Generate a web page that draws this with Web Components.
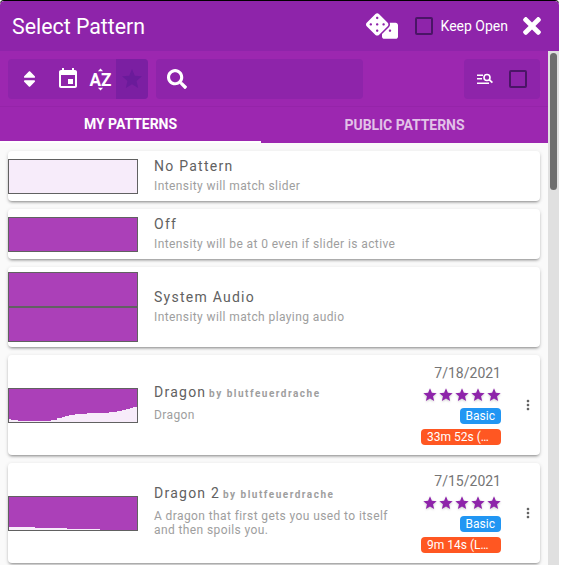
<!DOCTYPE html>
<html>
<head>
<meta charset="utf-8">
<title>Select Pattern</title>
<style>
  html, body { margin: 0; height: 100%; overflow: hidden; background: #fff; font-family: Roboto, "Liberation Sans", sans-serif; }
</style>
</head>
<body>
<pattern-dialog>
  <pattern-card kind="empty" name="No Pattern" style="height:50px">Intensity will match slider</pattern-card>
  <pattern-card kind="off" name="Off" style="height:50px">Intensity will be at 0 even if slider is active</pattern-card>
  <pattern-card kind="audio" name="System Audio" style="height:80px">Intensity will match playing audio</pattern-card>
  <pattern-card kind="line" name="Dragon" author="blutfeuerdrache" date="7/18/2021" duration="33m 52s (…"
    line="M0 33V30H2V30.5H9V32H42V30.5H48V29H53V28H56V27H60V26H66V25H70V24.5H78V24H82V23.5H100V22.5H108V21.5H113V20.5H117V19.5H121V18.5H124V17.5H128V33Z" style="height:100px">Dragon</pattern-card>
  <pattern-card kind="line" name="Dragon 2" author="blutfeuerdrache" date="7/15/2021" duration="9m 14s (L…"
    line="M0 33V30H26V31H58V32H91V33Z" style="height:100px">A dragon that first gets you used to itself and then spoils you.</pattern-card>
</pattern-dialog>

<script>
const ICONS = {
  dice: ["0 0 640 512", "M592 192H473.26c12.69 29.59 7.12 65.2-17 89.32L320 417.58V464c0 26.51 21.49 48 48 48h224c26.51 0 48-21.49 48-48V240c0-26.51-21.49-48-48-48zM480 376c-13.25 0-24-10.75-24-24 0-13.26 10.75-24 24-24s24 10.74 24 24c0 13.25-10.75 24-24 24zm-46.37-186.7L258.7 14.37c-19.16-19.16-50.23-19.16-69.39 0L14.37 189.3c-19.16 19.16-19.16 50.23 0 69.39L189.3 433.63c19.16 19.16 50.23 19.16 69.39 0L433.63 258.7c19.17-19.17 19.17-50.24 0-69.4zM96 248c-13.25 0-24-10.75-24-24 0-13.26 10.75-24 24-24s24 10.74 24 24c0 13.25-10.75 24-24 24zm128 128c-13.25 0-24-10.75-24-24 0-13.26 10.75-24 24-24s24 10.74 24 24c0 13.25-10.75 24-24 24zm0-128c-13.25 0-24-10.75-24-24 0-13.26 10.75-24 24-24s24 10.74 24 24c0 13.25-10.75 24-24 24zm0-128c-13.25 0-24-10.75-24-24 0-13.26 10.75-24 24-24s24 10.74 24 24c0 13.25-10.75 24-24 24zm128 128c-13.25 0-24-10.75-24-24 0-13.26 10.75-24 24-24s24 10.74 24 24c0 13.25-10.75 24-24 24z"],
  close: ["0 0 352 512", "M242.72 256l100.07-100.07c12.28-12.28 12.28-32.19 0-44.48l-22.24-22.24c-12.28-12.28-32.19-12.28-44.48 0L176 189.28 75.93 89.21c-12.28-12.28-32.19-12.28-44.48 0L9.21 111.45c-12.28 12.28-12.28 32.19 0 44.48L109.28 256 9.21 356.07c-12.28 12.28-12.28 32.19 0 44.48l22.24 22.24c12.28 12.28 32.2 12.28 44.48 0L176 322.72l100.07 100.07c12.28 12.28 32.2 12.28 44.48 0l22.24-22.24c12.28-12.28 12.28-32.19 0-44.48L242.72 256z"],
  sort: ["0 0 320 512", "M41 288h238c21.4 0 32.1 25.9 17 41L177 448c-9.4 9.4-24.6 9.4-33.9 0L24 329c-15.1-15.1-4.4-41 17-41zm255-105L177 64c-9.4-9.4-24.6-9.4-33.9 0L24 183c-15.1 15.1-4.4 41 17 41h238c21.4 0 32.1-25.9 17-41z"],
  search: ["0 0 512 512", "M505 442.7L405.3 343c-4.5-4.5-10.6-7-17-7H372c27.6-35.3 44-79.7 44-128C416 93.1 322.9 0 208 0S0 93.1 0 208s93.1 208 208 208c48.3 0 92.7-16.4 128-44v16.3c0 6.4 2.5 12.5 7 17l99.7 99.7c9.4 9.4 24.6 9.4 33.9 0l28.3-28.3c9.4-9.4 9.4-24.6.1-34zM208 336c-70.7 0-128-57.2-128-128 0-70.7 57.2-128 128-128 70.7 0 128 57.2 128 128 0 70.7-57.2 128-128 128z"],
  event: ["0 0 24 24", "M17 12h-5v5h5v-5zM16 1v2H8V1H6v2H5c-1.11 0-1.99.9-1.99 2L3 19c0 1.1.89 2 2 2h14c1.1 0 2-.9 2-2V5c0-1.1-.9-2-2-2h-1V1h-2zm3 18H5V8h14v11z"],
  star: ["0 0 24 24", "M12 17.27L18.18 21l-1.64-7.03L22 9.24l-7.19-.61L12 2 9.19 8.63 2 9.24l5.46 4.73L5.82 21z"],
  kebab: ["0 0 24 24", "M12 8c1.1 0 2-.9 2-2s-.9-2-2-2-2 .9-2 2 .9 2 2 2zm0 2c-1.1 0-2 .9-2 2s.9 2 2 2 2-.9 2-2-.9-2-2-2zm0 6c-1.1 0-2 .9-2 2s.9 2 2 2 2-.9 2-2-.9-2-2-2z"],
};

function icon(name, w, h, color) {
  const [box, d] = ICONS[name];
  return `<svg width="${w}" height="${h}" viewBox="${box}" style="display:block"><path fill="${color || "#fff"}" d="${d}"/></svg>`;
}

class CheckBox extends HTMLElement {
  constructor() {
    super();
    this.attachShadow({ mode: "open" }).innerHTML = `
      <style>
        :host { display: block; width: 18px; height: 18px; box-sizing: border-box; border: 2px solid #4a1566; border-radius: 2px; }
      </style>`;
  }
}

class DialogHeader extends HTMLElement {
  constructor() {
    super();
    this.attachShadow({ mode: "open" }).innerHTML = `
      <style>
        :host { display: flex; align-items: center; height: 50px; background: #8e24aa; color: #fff; padding-left: 12px; border-radius: 4px 4px 0 0; }
        .title { flex: 1; font-size: 21.33px; font-weight: 400; }
        .dice { margin-right: 17px; }
        .keep { margin: 0 15px 0 8px; font-size: 14px; }
        .close { margin-right: 18px; }
      </style>
      <div class="title">Select Pattern</div>
      <div class="dice">${icon("dice", 32, 26)}</div>
      <check-box></check-box>
      <div class="keep">Keep Open</div>
      <div class="close">${icon("close", 18, 26)}</div>`;
  }
}

class FilterToolbar extends HTMLElement {
  constructor() {
    super();
    this.attachShadow({ mode: "open" }).innerHTML = `
      <style>
        :host { display: flex; gap: 8px; padding: 8px; height: 56px; box-sizing: border-box; background: #9c27b0; border-bottom: 1px solid #9524a9; }
        .group { display: flex; align-items: center; height: 40px; background: #8e24aa; border-radius: 4px; overflow: hidden; }
        .btn { display: flex; align-items: center; justify-content: center; height: 40px; }
        .active { background: #7b1fa2; }
        .search { width: 207px; padding-left: 11px; box-sizing: border-box; }
        .spacer { flex: 1; }
        .az { font: 700 18px/18px Roboto, sans-serif; fill: #fff; }
        .filter { width: 76px; }
      </style>
      <div class="group">
        <div class="btn" style="width:42px">${icon("sort", 13, 20)}</div>
        <div class="btn" style="width:36px">${icon("event", 24, 24)}</div>
        <div class="btn" style="width:30px">
          <svg width="24" height="24" viewBox="0 0 24 24" style="display:block">
            <text class="az" x="0.5" y="18.5" textLength="22" lengthAdjust="spacingAndGlyphs">AZ</text>
            <path fill="#fff" d="M11.5 1.5l2.6 2.8H8.9zM11.5 23.5l-2.6-2.8h5.2z"/>
          </svg>
        </div>
        <div class="btn active" style="width:32px">${icon("star", 24, 24, "#6a1b9a")}</div>
      </div>
      <div class="group search">${icon("search", 20, 20)}</div>
      <div class="spacer"></div>
      <div class="group filter">
        <div class="btn" style="width:42px;margin-right:3px">
          <svg width="16" height="12" viewBox="0 0 16 12" style="display:block">
            <path fill="#fff" d="M0 1.5h6v1.4H0zM0 5h5v1.4H0zM0 9.6h12v1.4H0z"/>
            <circle cx="10" cy="4.5" r="3" fill="none" stroke="#fff" stroke-width="1.6"/>
            <path stroke="#fff" stroke-width="1.8" d="M12.2 6.6l3.2 3"/>
          </svg>
        </div>
        <check-box></check-box>
      </div>`;
  }
}

class PatternTabs extends HTMLElement {
  constructor() {
    super();
    this.attachShadow({ mode: "open" }).innerHTML = `
      <style>
        :host { display: grid; grid-template-columns: 261px 1fr; height: 36px; background: #9c27b0; font-size: 14px; font-weight: 700; letter-spacing: -.05px; }
        .tab { display: flex; align-items: center; justify-content: center; box-sizing: border-box; padding-bottom: 1px; color: rgba(255,255,255,.72); }
        .on { color: #fff; border-bottom: 2px solid #fff; }
      </style>
      <div class="tab on">MY PATTERNS</div>
      <div class="tab">PUBLIC PATTERNS</div>`;
  }
}

class PatternGraph extends HTMLElement {
  connectedCallback() {
    const kind = this.getAttribute("kind");
    const line = this.getAttribute("line");
    let inner = "";
    if (kind === "audio") inner = `<div class="fill"></div><div class="mid"></div><div class="fill"></div>`;
    else if (kind === "off") inner = `<div class="fill"></div>`;
    else if (kind === "line") inner = `<svg width="128" height="33" viewBox="0 0 128 33" shape-rendering="crispEdges"><path fill="#f7ecfa" d="${line}"/></svg>`;
    this.attachShadow({ mode: "open" }).innerHTML = `
      <style>
        :host { display: flex; flex-direction: column; flex: none; width: 130px; height: ${kind === "audio" ? 70 : 35}px; box-sizing: border-box; border: 1px solid #616161; background: ${kind === "empty" ? "#f7ecfa" : "#ab40b8"}; }
        .fill { flex: 1; background: #ab40b8; }
        .mid { height: 2px; background: #616161; }
        svg { display: block; }
      </style>
      ${inner}`;
  }
}

class RatingStars extends HTMLElement {
  constructor() {
    super();
    const star = icon("star", 16, 16, "#8e24aa");
    this.attachShadow({ mode: "open" }).innerHTML = `
      <style>
        :host { display: flex; margin-right: -1px; filter: drop-shadow(0 1px 1px rgba(0,0,0,.2)); }
      </style>
      ${star.repeat(5)}`;
  }
}

class InfoChip extends HTMLElement {
  constructor() {
    super();
    this.attachShadow({ mode: "open" }).innerHTML = `
      <style>
        :host { display: block; height: 16px; line-height: 16px; box-sizing: border-box; padding: 0 6px; border-radius: 4px; color: #fff; font-size: 12px; white-space: nowrap; }
      </style>
      <slot></slot>`;
  }
}

class PatternCard extends HTMLElement {
  connectedCallback() {
    const author = this.getAttribute("author");
    const date = this.getAttribute("date");
    const meta = date ? `
      <div class="meta">
        <div class="date">${date}</div>
        <rating-stars></rating-stars>
        <info-chip style="background:#2196f3">Basic</info-chip>
        <info-chip style="background:#ff5722;width:80px">${this.getAttribute("duration")}</info-chip>
      </div>
      <div class="kebab">${icon("kebab", 16, 16, "#616161")}</div>` : "";
    this.attachShadow({ mode: "open" }).innerHTML = `
      <style>
        :host { display: flex; align-items: center; flex: none; box-sizing: border-box; background: #fff; border-radius: 4px; box-shadow: 0 2px 3px -1px rgba(0,0,0,.4), 0 1px 4px 0 rgba(0,0,0,.12); }
        .text { flex: 1; min-width: 0; margin-left: 16px; padding-bottom: 3px; }
        :host([date]) .text { padding-bottom: 6px; }
        .name { font-size: 14px; line-height: 20px; font-weight: 400; letter-spacing: 1.25px; color: #616161; white-space: nowrap; }
        .author { font-size: 10px; font-weight: 700; letter-spacing: 1.5px; color: #9e9e9e; margin-left: -2px; }
        .sub { margin-top: 3px; font-size: 12px; line-height: 14px; letter-spacing: .4px; color: #9e9e9e; }
        :host([date]) .sub { margin-top: 4px; max-width: 240px; }
        .meta { display: flex; flex-direction: column; align-items: flex-end; gap: 5px; width: 82px; margin-right: 19px; padding-bottom: 4px; }
        .date { box-sizing: border-box; height: 20px; padding-top: 2px; font-size: 14px; line-height: 18px; color: #757575; }
        .kebab { margin-right: 4px; }
      </style>
      <pattern-graph kind="${this.getAttribute("kind")}" ${this.hasAttribute("line") ? `line="${this.getAttribute("line")}"` : ""}></pattern-graph>
      <div class="text">
        <div class="name">${this.getAttribute("name")}${author ? ` <span class="author">by ${author}</span>` : ""}</div>
        <div class="sub"><slot></slot></div>
      </div>
      ${meta}`;
  }
}

class PatternDialog extends HTMLElement {
  constructor() {
    super();
    this.attachShadow({ mode: "open" }).innerHTML = `
      <style>
        :host { display: flex; flex-direction: column; width: 559px; height: 564px; margin-top: 1px; border-radius: 4px 4px 0 0; box-shadow: 0 -1px 0 #000; overflow: hidden; }
        .body { flex: 1; min-height: 0; display: flex; }
        .main { width: 548px; display: flex; flex-direction: column; }
        .list { flex: 1; min-height: 0; overflow: hidden; display: flex; flex-direction: column; gap: 8px; padding: 8px; background: #fafafa; }
        .track { flex: 1; background: #e0e0e0; padding: 2px; box-sizing: border-box; }
        .thumb { width: 7px; height: 137px; background: #6e6e6e; border-radius: 4px; }
      </style>
      <dialog-header></dialog-header>
      <div class="body">
        <div class="main">
          <filter-toolbar></filter-toolbar>
          <pattern-tabs></pattern-tabs>
          <div class="list"><slot></slot></div>
        </div>
        <div class="track"><div class="thumb"></div></div>
      </div>`;
  }
}

customElements.define("check-box", CheckBox);
customElements.define("dialog-header", DialogHeader);
customElements.define("filter-toolbar", FilterToolbar);
customElements.define("pattern-tabs", PatternTabs);
customElements.define("pattern-graph", PatternGraph);
customElements.define("rating-stars", RatingStars);
customElements.define("info-chip", InfoChip);
customElements.define("pattern-card", PatternCard);
customElements.define("pattern-dialog", PatternDialog);
</script>
</body>
</html>
